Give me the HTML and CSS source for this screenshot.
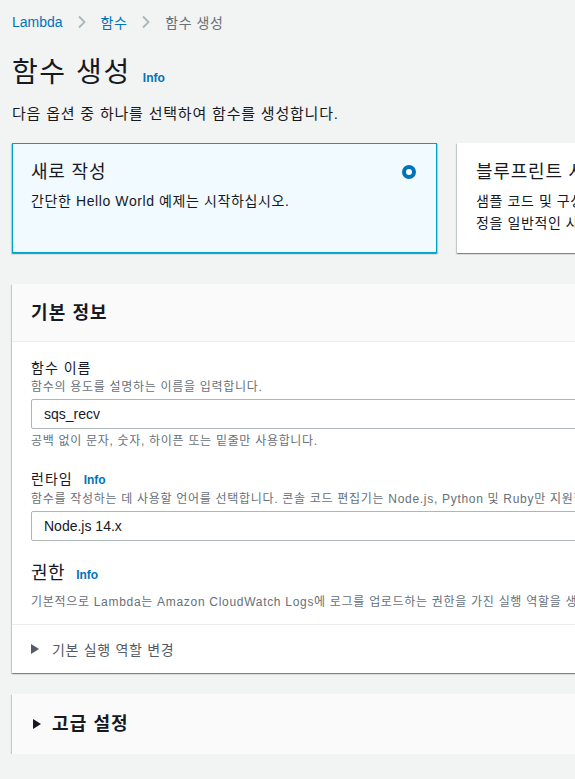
FILE: index.html
```html
<!DOCTYPE html>
<html lang="ko">
<head>
<meta charset="utf-8">
<link rel="stylesheet" href="styles.css">
</head>
<body>
<div class="page">
  <nav class="crumbs">
    <a class="crumb-link">Lambda</a>
    <svg class="chev" width="10" height="14" viewBox="0 0 10 14"><path d="M2 1.5 L7.5 7 L2 12.5" fill="none" stroke="#aab7b8" stroke-width="1.8"/></svg>
    <a class="crumb-link ko">함수</a>
    <svg class="chev" width="10" height="14" viewBox="0 0 10 14"><path d="M2 1.5 L7.5 7 L2 12.5" fill="none" stroke="#aab7b8" stroke-width="1.8"/></svg>
    <span class="crumb-current ko">함수 생성</span>
  </nav>

  <div class="title-row">
    <h1 class="page-title">함수 생성</h1>
    <span class="info">Info</span>
  </div>
  <p class="page-desc">다음 옵션 중 하나를 선택하여 함수를 생성합니다.</p>

  <div class="tiles">
    <div class="tile tile-selected">
      <div class="tile-head">
        <div class="tile-title">새로 작성</div>
        <span class="radio"></span>
      </div>
      <div class="tile-desc">간단한 Hello World 예제는 시작하십시오.</div>
    </div>
    <div class="tile">
      <div class="tile-head">
        <div class="tile-title">블루프린트 사용</div>
      </div>
      <div class="tile-desc">샘플 코드 및 구성 사전 설정을 사용하여 일반적인 사용 사례에 대한 Lambda 애플리케이션을 구축합니다. 구성 사전 설<br>정을 일반적인 사용 사례에 맞게</div>
    </div>
  </div>

  <section class="card">
    <header class="card-header">
      <h2 class="card-title">기본 정보</h2>
    </header>
    <div class="card-body">
      <div class="field">
        <div class="label">함수 이름</div>
        <div class="hint">함수의 용도를 설명하는 이름을 입력합니다.</div>
        <div class="input">sqs_recv</div>
        <div class="hint constraint">공백 없이 문자, 숫자, 하이픈 또는 밑줄만 사용합니다.</div>
      </div>
      <div class="field">
        <div class="label">런타임<span class="info">Info</span></div>
        <div class="hint">함수를 작성하는 데 사용할 언어를 선택합니다. 콘솔 코드 편집기는 Node.js, Python 및 Ruby만 지원합니다.</div>
        <div class="input">Node.js 14.x</div>
      </div>
      <div class="field field-perm">
        <div class="perm-title">권한<span class="info">Info</span></div>
        <div class="hint">기본적으로 Lambda는 Amazon CloudWatch Logs에 로그를 업로드하는 권한을 가진 실행 역할을 생성합니다.</div>
      </div>
    </div>
    <div class="expander">
      <span class="caret"></span>
      <span class="expander-label">기본 실행 역할 변경</span>
    </div>
  </section>

  <section class="card card-collapsed">
    <header class="card-header card-header-only">
      <span class="caret caret-dark"></span>
      <h2 class="card-title">고급 설정</h2>
    </header>
  </section>
</div>
</body>
</html>
```

FILE: styles.css
```css
html, body {
  margin: 0;
  padding: 0;
  background: #f2f3f3;
  overflow: hidden;
}
body {
  font-family: "Liberation Sans", "Noto Sans CJK KR", sans-serif;
  color: #16191f;
  font-size: 14px;
}
.page {
  width: 1000px;
  padding: 0 0 0 12px;
}
.crumbs {
  display: flex;
  align-items: center;
  gap: 14px;
  height: 44px;
  font-size: 14px;
}
.ko { letter-spacing: 0.5px; }
.crumb-link { color: #0073bb; }
.crumb-current { color: #687078; }
.chev { display: block; }
.title-row {
  display: flex;
  align-items: baseline;
  gap: 12px;
  margin-top: 9px;
}
.page-title {
  margin: 0;
  font-size: 28px;
  font-weight: 400;
  line-height: 40px;
  letter-spacing: 1.6px;
}
.info {
  color: #0073bb;
  font-weight: 700;
  font-size: 12px;
  letter-spacing: 0;
}
.label .info, .perm-title .info { margin-left: 11px; }
.page-desc {
  margin: 10px 0 0;
  font-size: 15px;
  line-height: 22px;
  letter-spacing: 0.8px;
}
.tiles {
  display: grid;
  grid-template-columns: 425px 425px;
  gap: 20px;
  margin-top: 18px;
}
.tile {
  height: 110px;
  box-sizing: border-box;
  background: #fff;
  padding: 16px 19px;
  box-shadow: 0 1px 1px 0 rgba(0,28,36,.3), 1px 1px 1px 0 rgba(0,28,36,.15), -1px 1px 1px 0 rgba(0,28,36,.15);
}
.tile-selected {
  background: #f1faff;
  border: 1px solid #00a1c9;
  padding: 15px 18px;
}
.tile-head {
  display: flex;
  justify-content: space-between;
  align-items: center;
}
.tile-title {
  font-size: 18px;
  line-height: 26px;
  letter-spacing: 0.8px;
}
.radio {
  width: 14px;
  height: 14px;
  box-sizing: border-box;
  border-radius: 50%;
  border: 4px solid #0073bb;
  background: #fff;
  margin-right: 2px;
}
.tile-desc {
  margin-top: 5px;
  line-height: 22px;
  white-space: nowrap;
  letter-spacing: 0.6px;
}
.card {
  margin-top: 31px;
  background: #fff;
  box-shadow: 0 1px 1px 0 rgba(0,28,36,.3), 1px 1px 1px 0 rgba(0,28,36,.15), -1px 1px 1px 0 rgba(0,28,36,.15);
}
.card-header {
  background: #fafafa;
  border-bottom: 1px solid #eaeded;
  height: 58px;
  box-sizing: border-box;
  padding: 0 19px;
  display: flex;
  align-items: center;
  gap: 11px;
}
.card-title {
  margin: 0;
  font-size: 18px;
  font-weight: 700;
  line-height: 24px;
  letter-spacing: 1.1px;
}
.card-body {
  padding: 15px 19px 14px;
  border-bottom: 1px solid #eaeded;
}
.field { margin-bottom: 19px; }
.label {
  line-height: 22px;
  letter-spacing: 1px;
}
.hint {
  font-size: 12px;
  color: #687078;
  line-height: 16px;
  letter-spacing: 0.7px;
  white-space: nowrap;
}
.constraint { margin-top: 4px; }
.input {
  margin-top: 4px;
  height: 30px;
  box-sizing: border-box;
  border: 1px solid #aab7b8;
  border-radius: 2px;
  padding: 0 12px;
  display: flex;
  align-items: center;
  color: #16191f;
}
.field-perm { margin-bottom: 0; margin-top: 10px; }
.perm-title {
  font-size: 18px;
  line-height: 26px;
  margin-bottom: 6px;
  letter-spacing: 0.5px;
}
.expander {
  height: 48px;
  display: flex;
  align-items: center;
  gap: 13px;
  padding: 0 19px;
  color: #545b64;
  font-size: 14px;
}
.expander-label { letter-spacing: 0.7px; }
.caret {
  width: 0;
  height: 0;
  border-top: 5px solid transparent;
  border-bottom: 5px solid transparent;
  border-left: 8px solid #545b64;
}
.caret-dark { border-left-color: #16191f; margin-left: 2px; }
.card-collapsed { margin-top: 21px; }
.card-header-only { border-bottom: none; height: 60px; }
```
